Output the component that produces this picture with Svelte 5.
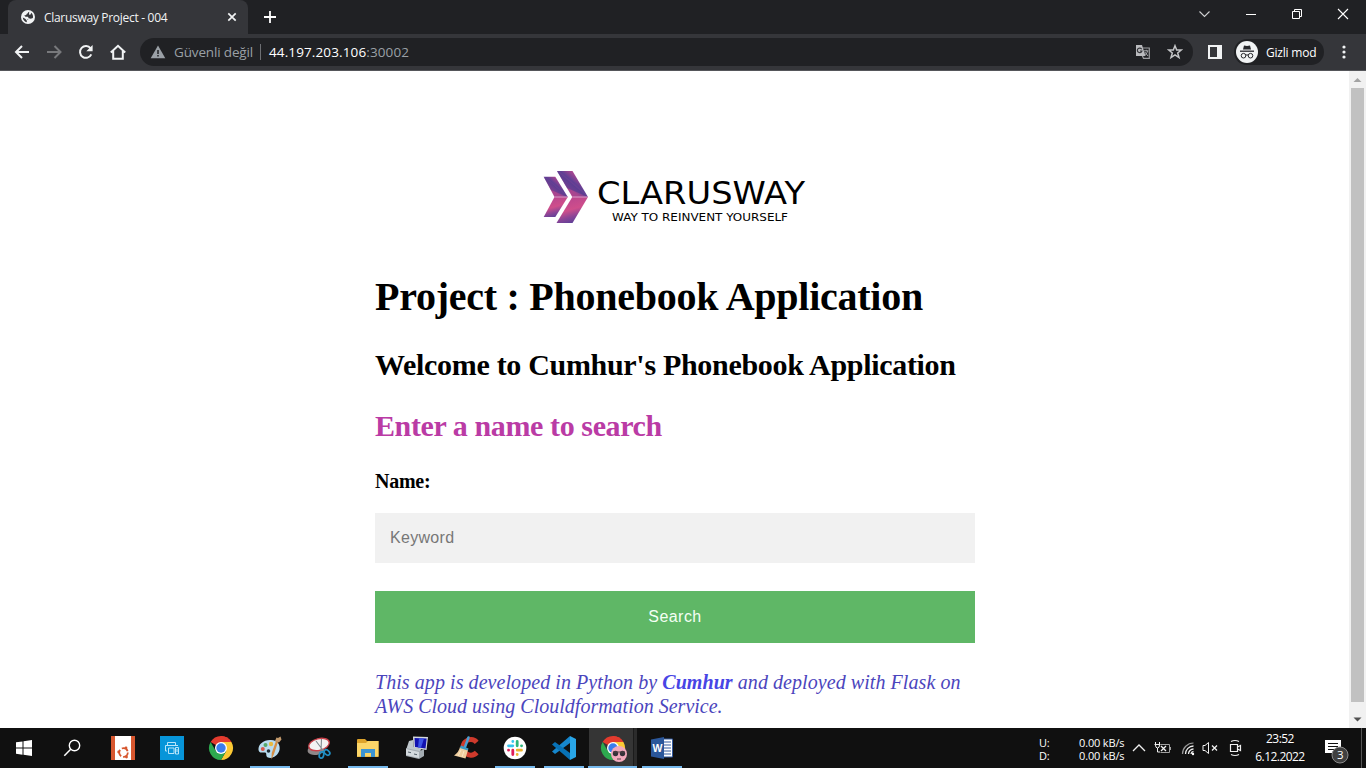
<script>
  const apps = [
    { id: 'ubuntu' }, { id: 'printer' }, { id: 'chrome' }, { id: 'paint', open: true },
    { id: 'snip' }, { id: 'files', open: true }, { id: 'putty' }, { id: 'cleaner' },
    { id: 'slack', open: true }, { id: 'code', open: true },
    { id: 'incognito', open: true, active: true }, { id: 'word', open: true }
  ];
</script>

{#snippet chromeMark()}
  <path d="M12 12L1.6 6A12 12 0 0 1 22.4 6Z" fill="#e33b2e" />
  <path d="M12 12V0A12 12 0 0 1 22.4 6Z" fill="#e33b2e" />
  <path d="M22.4 6A12 12 0 0 1 12 24L17.2 15L12 6Z" fill="#fcc934" />
  <path d="M1.6 6A12 12 0 0 0 12 24L17.2 15L6.8 15Z" fill="#2da94f" />
  <circle cx="12" cy="12" r="6" fill="#fff" />
  <circle cx="12" cy="12" r="4.7" fill="#3b7ded" />
{/snippet}

<div class="screen">
  <header class="tabs">
    <div class="tab">
      <svg class="globe" width="14" height="14" viewBox="0 0 14 14">
        <circle cx="7" cy="7" r="7" fill="#f1f3f4" />
        <path d="M8.200 1.700C6.600 2.300 7.400 3.300 5.800 3.800L5.200 5L3.200 5.600L4.500 6.700H6.800L7.900 8.200L6.800 9.700L5.600 10.300L5.900 12.300C3.600 11.700 2 10 1.800 7.500L4.200 8.700L5.600 10.300L7.900 8.200L9.800 8.700L11.900 8C12.400 6 11.600 3.900 10.200 2.800L9.600 4.400L8 4.700Z" fill="#35363a" />
      </svg>
      <span class="title">Clarusway Project - 004</span>
      <svg class="close" width="10" height="10" viewBox="0 0 10 10"><path d="M1.3 1.3L8.7 8.7M8.7 1.3L1.3 8.7" stroke="#f1f3f4" stroke-width="1.7" /></svg>
    </div>
    <svg class="plus" width="12" height="12" viewBox="0 0 12 12"><path d="M6 0V12M0 6H12" stroke="#fff" stroke-width="1.8" /></svg>
    <div class="controls">
      <svg width="46" height="28" viewBox="0 0 46 28"><path d="M17.5 11.5L22.5 16.5L27.5 11.5" fill="none" stroke="#d0d1d3" stroke-width="1.1" /></svg>
      <svg width="46" height="28" viewBox="0 0 46 28"><path d="M18 14.5H28" stroke="#fff" /></svg>
      <svg width="46" height="28" viewBox="0 0 46 28"><path d="M18.500 11.500H25.500V18.500H18.500ZM20.500 11V9.500H27.500V16.500H26" fill="none" stroke="#fff" /></svg>
      <svg width="46" height="28" viewBox="0 0 46 28"><path d="M18 9L28 19M28 9L18 19" stroke="#fff" stroke-width="1.1" /></svg>
    </div>
  </header>

  <div class="toolbar">
    <nav class="nav">
      <svg width="32" height="36" viewBox="0 0 32 36"><path d="M29 18H16.500M22 12L16 18L22 24" fill="none" stroke="#f1f3f4" stroke-width="2" /></svg>
      <svg width="32" height="36" viewBox="0 0 32 36"><path d="M15 18H28M22.500 12L28.500 18L22.500 24" fill="none" stroke="#78797c" stroke-width="2" /></svg>
      <svg width="32" height="36" viewBox="0 0 32 36"><path d="M27.300 20.400A5.900 5.900 0 1 1 26.600 14.300" fill="none" stroke="#f1f3f4" stroke-width="2" /><path d="M28.600 11V17.300H22.300Z" fill="#f1f3f4" /></svg>
      <svg width="32" height="36" viewBox="0 0 32 36"><path d="M14.800 18.600L22 11.800L29.200 18.600M17.200 17V24.700H26.800V17" fill="none" stroke="#f1f3f4" stroke-width="2" /></svg>
    </nav>
    <div class="address">
      <svg width="16" height="14" viewBox="0 0 16 14"><path d="M8 .6L15.300 13.200H.7Z" fill="#9aa0a6" /><path d="M8 5V9M8 10.100V11.600" stroke="#202124" stroke-width="1.500" /></svg>
      <span class="unsafe">Güvenli değil</span>
      <span class="bar"></span>
      <span class="url">44.197.203.106<i>:30002</i></span>
      <svg class="translate" width="16" height="16" viewBox="0 0 16 16">
        <path d="M6 4H14.300V14.300H8.500L7 11" fill="none" stroke="#9c9da0" stroke-width="1.200" />
        <path d="M1 1H7L10.500 12H1Z" fill="#babbbe" />
        <path d="M6.700 5.200A2.300 2.300 0 1 0 6.900 7H4.900" fill="none" stroke="#35363a" stroke-width="1.200" />
        <path d="M8.800 6.800H13.400M11.300 5.800V6.800M12.500 7C12 9.600 10.500 11 9.800 11.500M9.800 8L13 12" fill="none" stroke="#a6a7aa" />
      </svg>
      <svg class="star" width="16" height="16" viewBox="0 0 16 16"><path d="M8 1.700L9.700 6H14.300L10.700 8.900L12 13.600L8 10.900L4 13.600L5.300 8.900L1.700 6H6.300Z" fill="none" stroke="#c4c5c7" stroke-width="1.500" /></svg>
    </div>
    <svg class="panel" width="14" height="14" viewBox="0 0 14 14"><path fill-rule="evenodd" d="M0 0H14V14H0ZM2 2V12H9V2Z" fill="#f1f3f4" /></svg>
    <div class="mode">
      <svg width="22" height="22" viewBox="0 0 22 22">
        <circle cx="11" cy="11" r="11" fill="#f1f3f4" />
        <path d="M7 8.500L8 4.500L11 5L14 4.500L15 8.500Z" fill="#27282c" /><path d="M4 10.200H18" stroke="#27282c" stroke-width="1.300" />
        <circle cx="7.500" cy="14.700" r="2.300" fill="none" stroke="#27282c" /><circle cx="14.500" cy="14.700" r="2.300" fill="none" stroke="#27282c" />
        <path d="M9.500 14.200Q11 13.500 12.500 14.200" fill="none" stroke="#27282c" />
      </svg>
      <span>Gizli mod</span>
    </div>
    <svg class="dots" width="4" height="14" viewBox="0 0 4 14"><circle cx="2" cy="2" r="1.600" fill="#f1f3f4" /><circle cx="2" cy="7" r="1.600" fill="#f1f3f4" /><circle cx="2" cy="12" r="1.600" fill="#f1f3f4" /></svg>
  </div>

  <main class="viewport">
    <div class="page">
      <svg class="logo" width="270" height="60" viewBox="540 166 270 60">
        <defs>
          <linearGradient id="top" x1="0" y1=".9" x2=".9" y2="0"><stop offset="0" stop-color="#b5468f" /><stop offset=".35" stop-color="#a8458f" /><stop offset=".55" stop-color="#5d3f94" /><stop offset=".8" stop-color="#b94790" /><stop offset="1" stop-color="#7a4098" /></linearGradient>
          <linearGradient id="low" x1=".4" y1="0" x2=".75" y2="1"><stop offset="0" stop-color="#b9468f" /><stop offset=".45" stop-color="#cf4e8b" /><stop offset=".7" stop-color="#8b4496" /><stop offset="1" stop-color="#4d3f98" /></linearGradient>
        </defs>
        <path d="M543.700 176.800H555.300L567.800 197H554.500Z" fill="url(#top)" />
        <path d="M554.500 197H567.800L555.300 217H543.700Z" fill="url(#low)" />
        <path d="M557 171H572.500L588 197H572.300Z" fill="url(#top)" />
        <path d="M572.300 197H588L572.500 223H556.500Z" fill="url(#low)" />
        <path d="M557 171L588 197L567 188Z" fill="#4f3c92" opacity=".65" />
        <path d="M543.700 176.800L567.800 197L551 190Z" fill="#4f3c92" opacity=".55" />
        <path d="M554.500 197H567.800M572.300 197H588" stroke="#dc9cc8" stroke-width="1.200" />
        <text x="597" y="203.700" font-size="31.500" textLength="208" lengthAdjust="spacingAndGlyphs">CLARUSWAY</text>
        <text x="612" y="220.600" font-size="10.800" textLength="176" lengthAdjust="spacingAndGlyphs">WAY TO REINVENT YOURSELF</text>
      </svg>
      <h1>Project : Phonebook Application</h1>
      <h2>Welcome to Cumhur's Phonebook Application</h2>
      <h2 class="prompt">Enter a name to search</h2>
      <div class="label">Name:</div>
      <div class="field">Keyword</div>
      <div class="button">Search</div>
      <p>This app is developed in Python by <b>Cumhur</b> and deployed with Flask on<br /><span class="last">AWS Cloud using Clouldformation Service.</span></p>
    </div>
    <aside class="scroll">
      <svg width="17" height="17" viewBox="0 0 17 17"><path d="M4.500 11L8.500 7L12.500 11Z" fill="#a3a3a3" /></svg>
      <div class="thumb"></div>
      <svg width="17" height="17" viewBox="0 0 17 17"><path d="M4.500 6.500L8.500 10.500L12.500 6.500Z" fill="#505050" /></svg>
    </aside>
  </main>

  <footer class="taskbar">
    <svg width="48" height="40" viewBox="0 0 48 40"><path d="M16 14.300L22.500 13.400V19.500H16ZM23.500 13.200L32 12V19.500H23.500ZM16 20.500H22.500V26.700L16 25.800ZM23.500 20.500H32V28L23.500 26.800Z" fill="#fff" /></svg>
    <svg class="search" width="48" height="40" viewBox="0 0 48 40"><circle cx="26.500" cy="17.500" r="5.200" fill="none" stroke="#fff" stroke-width="1.400" /><path d="M22.700 21.300L16.300 27.700" stroke="#fff" stroke-width="1.500" /></svg>
    {#each apps as app}
      <div class="app" class:open={app.open} class:active={app.active}>
        <svg width="24" height="24" viewBox="0 0 24 24">
          {#if app.id === 'ubuntu'}
            <path d="M0 0H24V24H0Z" fill="#d7572f" /><path d="M4 0H20V24H4Z" fill="#fff" />
            <circle cx="12.500" cy="16.500" r="4.300" fill="none" stroke="#d7572f" stroke-width="1.800" stroke-dasharray="7 2" /><circle cx="7.700" cy="16" r="1.400" fill="#d7572f" /><circle cx="15" cy="12" r="1.400" fill="#d7572f" /><circle cx="15.500" cy="21" r="1.400" fill="#d7572f" />
          {:else if app.id === 'printer'}
            <path d="M0 0H24V24H0Z" fill="#0795d9" /><path d="M7.500 9V6.500H15.500V9M7 15H5.500V9.500H18M8.500 12H14V17.500H8.500ZM15.500 11.500H18.500V18H15.500ZM17 13V16" fill="none" stroke="#b9e5fa" />
          {:else if app.id === 'chrome'}
            {@render chromeMark()}
          {:else if app.id === 'paint'}
            <path d="M.5 14C0 8 6 3.500 13 4C20 4.500 22.500 9 21.500 14C20 20 14 23 10 21.500C7 20.300 9.500 17 7 16.500C4 16 1.500 18 .5 14Z" fill="#b9dcf0" />
            <circle cx="4.800" cy="13" r="2" fill="#d8584b" /><circle cx="7.500" cy="9" r="2" fill="#54a86a" /><circle cx="13" cy="8" r="2.200" fill="#e7b940" /><circle cx="10.500" cy="15" r="1.800" fill="#1e2b35" />
            <path d="M20 6L16 18L13.500 23.500L13.700 17L18 5Z" fill="#d58e45" /><path d="M17 5L18.500 1.500L20 2L22.500 .5L23.500 3.500L21 6.500Z" fill="#c39a6c" />
          {:else if app.id === 'snip'}
            <ellipse cx="9" cy="14" rx="8.500" ry="5" fill="#8e8788" transform="rotate(-8 9 14)" /><ellipse cx="12" cy="8.500" rx="10.500" ry="5.800" fill="#f3f3f3" stroke="#c9414a" stroke-width="1.400" transform="rotate(-14 12 8.500)" />
            <path d="M9 5L16.500 15M14.500 3L14 15" stroke="#7f8b90" stroke-width="1.100" /><ellipse cx="14.500" cy="19" rx="2.200" ry="3.200" fill="none" stroke="#218fc4" stroke-width="1.700" transform="rotate(15 14.500 19)" /><ellipse cx="20" cy="16.500" rx="2.200" ry="3.200" fill="none" stroke="#218fc4" stroke-width="1.700" transform="rotate(-50 20 16.500)" />
          {:else if app.id === 'files'}
            <path d="M1 4Q1 3 2 3H9L11 5H22.500V21H1Z" fill="#dda32b" /><path d="M1 7H10L12 5H22.500V20.500H1Z" fill="#fbd568" /><path d="M5 21V13H19V21H15V17H9V21Z" fill="#3c94d2" />
          {:else if app.id === 'putty'}
            <path d="M8 .5L23 1L21.500 14L8.500 12Z" fill="#d4d9dd" /><path d="M9.500 2L21.700 2.500L20.500 12.500L10 11Z" fill="#1212b0" /><path d="M14 2.200L19 2.400L16 11.800L13 11.400Z" fill="#3b54e7" />
            <path d="M4 5L8 4L8.500 11L16 13L15 17L1 14Z" fill="#bfc7cc" /><path d="M1 12L15 15L19 13V20L14 23L1 20Z" fill="#a5adb3" /><path d="M1 13L14 16V22L1 19Z" fill="#d3d9dd" /><path d="M3 16L6 16.700M9 18L12 18.700" stroke="#536069" />
          {:else if app.id === 'cleaner'}
            <path d="M22.700 6.300A7.800 7.800 0 1 0 22.700 16.500" fill="none" stroke="#cf3a2c" stroke-width="5" /><path d="M14.500 1.500L11 11" stroke="#4a9fd3" stroke-width="2.500" stroke-linecap="round" /><path d="M6 11L14 14L11.500 22.500L0 19.500Q5 16 6 11Z" fill="#f0cf9f" /><path d="M7 9.500L14.500 12.500L13.800 14.500L5.800 12Z" fill="#3b99c7" /><path d="M7 14L4 20M10 15L8 21" stroke="#fbe7c6" />
          {:else if app.id === 'slack'}
            <circle cx="12" cy="12" r="11.300" fill="#fff" />
            <g fill="none" stroke-linecap="round" stroke-width="2.800"><path d="M5.500 9.800H9.800M9.800 5.500V5.600" stroke="#36c5f0" /><path d="M14.200 5.500V9.800M18.500 9.800H18.600" stroke="#2eb67d" /><path d="M14.200 14.200H18.500M14.200 18.500V18.600" stroke="#ecb22e" /><path d="M5.500 14.200H5.600M9.800 14.200V18.500" stroke="#e01e5a" /></g>
          {:else if app.id === 'code'}
            <path d="M18 0V7L3 18L0 15.500Z" fill="#1687cd" /><path d="M0 8.500L3 6L18 17V24Z" fill="#0872b7" /><path d="M18 0L24 3V21L18 24Z" fill="#29a6e8" />
          {:else if app.id === 'incognito'}
            {@render chromeMark()}
            <circle cx="18" cy="18" r="8" fill="#f3a9bd" /><circle cx="14.500" cy="17.500" r="2.700" fill="#363139" /><circle cx="21.500" cy="17.500" r="2.700" fill="#363139" /><path d="M12 16H24M16 23H20" stroke="#544047" />
          {:else}
            <path d="M12 3H22.500V21H12Z" fill="#fff" stroke="#335a9e" /><path d="M14 6H21M14 9H21M14 12H21M14 15H21M14 18H21" stroke="#335a9e" /><path d="M1 3.500L14 1V23L1 20.500Z" fill="#2b579a" /><text class="w" x="2.500" y="16" font-size="10.500" font-weight="700" fill="#fff">W</text>
          {/if}
        </svg>
      </div>
    {/each}
    <div class="net"><span>U:</span><span>0.00 kB/s</span><span>D:</span><span>0.00 kB/s</span></div>
    <svg class="tray" width="120" height="40" viewBox="1128 728 120 40" fill="none" stroke="#f0f0f0">
      <path d="M1133 751L1139 745L1145 751" stroke-width="1.300" />
      <path d="M1157.500 752V748M1155.500 742V745Q1155.500 748 1157.500 748Q1159.500 748 1159.500 745V742M1154.500 744.500H1160.500M1157.500 752H1160" /><path d="M1161 744.500H1169.500V752.500H1160.500M1170.500 747V750" stroke="#a0a0a0" /><path d="M1161 746L1166 751M1166 746L1161 751" stroke-width="1.300" />
      <path d="M1182.500 754A11 11 0 0 1 1193.500 743" stroke="#999" stroke-width="1.200" /><path d="M1185.500 754A8 8 0 0 1 1193.500 746M1188.500 754A5 5 0 0 1 1193.500 749M1191 754A3 3 0 0 1 1193.500 751.500" stroke-width="1.300" /><circle cx="1193" cy="754" r="1.200" fill="#fff" stroke="none" />
      <path d="M1203 745.500H1205L1208.500 742.500V753.500L1205 750.500H1203Z" /><path d="M1212 745.500L1217 750.500M1217 745.500L1212 750.500" stroke-width="1.300" />
      <path d="M1230.500 744.500H1237.500V751.500H1230.500ZM1237.500 747L1240.500 745.500V750.500L1237.500 749M1231 741.500Q1235 739.500 1239 741.500M1231 754.500Q1235 756.500 1239 754.500" stroke-width="1.200" />
    </svg>
    <div class="clock"><span>23:52</span><span class="date">6.12.2022</span></div>
    <svg class="notice" width="28" height="28" viewBox="0 0 28 28"><path d="M1 2H17V15H11V18L8 15H1Z" fill="#fff" /><path d="M4 5.500H14M4 8.500H14M4 11.500H11" stroke="#111" /><circle cx="16" cy="17" r="8" fill="#404040" stroke="#8b8b8b" /><text x="13" y="21.300" font-size="11.500" fill="#fff">3</text></svg>
    <div class="peek"></div>
  </footer>
</div>

<style>
  :global(body) { margin: 0; overflow: hidden; }
  svg { display: block; flex: none; }
  .screen { width: 1366px; height: 768px; display: flex; flex-direction: column; overflow: hidden; background: #fff; font-family: "Open Sans", "Noto Sans", sans-serif; white-space: nowrap; }
  .tabs { height: 34px; flex: none; background: #202124; display: flex; }
  .tab { width: 240px; height: 34px; margin-left: 8px; border-radius: 8px 8px 0 0; background: #35363a; display: flex; align-items: center; box-sizing: border-box; padding: 0 11px 0 13px; color: #f1f3f4; font-size: 12px; }
  .title { margin-left: 9px; letter-spacing: -0.3px; }
  .close { margin-left: auto; }
  .plus { margin: 11px 0 0 16px; }
  .controls { margin-left: auto; display: flex; }
  .toolbar { height: 37px; flex: none; box-sizing: border-box; border-bottom: 1px solid #55565a; background: #35363a; display: flex; align-items: center; color: #fff; }
  .nav { width: 140px; display: flex; }
  .address { width: 1053px; height: 28px; box-sizing: border-box; background: #202124; border-radius: 14px; display: flex; align-items: center; padding: 0 10px; font-size: 13.5px; }
  .unsafe { margin-left: 8px; color: #9aa0a6; width: 79px; letter-spacing: -0.15px; }
  .bar { width: 1px; height: 16px; background: #6d6f73; margin: 0 8px 0 7px; }
  .url { letter-spacing: 0.12px; }
  .url i { font-style: normal; color: #9aa0a6; }
  .translate { margin-left: auto; }
  .star { margin-left: 16px; }
  .panel { margin-left: 15px; }
  .mode { width: 90px; height: 26px; box-sizing: border-box; margin-left: 12px; padding-left: 2px; border-radius: 13px; background: #202124; display: flex; align-items: center; font-size: 12px; }
  .mode span { margin-left: 8px; letter-spacing: -0.2px; }
  .dots { margin-left: 18px; }
  .viewport { height: 657px; flex: none; display: flex; justify-content: space-between; overflow: hidden; }
  .page { width: 600px; margin-left: 375px; padding-top: 95px; font-family: "Liberation Serif", serif; color: #000; }
  .logo { margin-left: 165px; font-family: "DejaVu Sans", sans-serif; }
  h1 { font-size: 40px; line-height: 46px; margin: 48px 0 0; letter-spacing: -0.26px; }
  h2 { font-size: 30px; line-height: 34px; margin: 28px 0 0; letter-spacing: -0.31px; }
  .prompt { color: #ba3ba5; margin-top: 27px; letter-spacing: -0.4px; }
  .label { font-size: 20px; font-weight: 700; line-height: 24px; margin-top: 26px; letter-spacing: -0.25px; }
  .field { box-sizing: border-box; height: 50px; margin-top: 20px; background: #f1f1f1; color: #777; padding-left: 15px; font: 16px/49px "Liberation Sans", sans-serif; letter-spacing: 0.3px; }
  .button { height: 52px; margin-top: 28px; background: #5fb766; color: #f4fff4; font: 16px/51px "Liberation Sans", sans-serif; text-align: center; letter-spacing: 0.45px; }
  p { font-size: 20px; font-style: italic; line-height: 24px; color: #4b45bd; margin: 27px 0 0; letter-spacing: 0.065px; }
  p b { color: #4845e5; }
  .last { letter-spacing: 0; }
  .scroll { width: 17px; background: #f1f1f1; display: flex; flex-direction: column; align-items: center; }
  .thumb { width: 13px; height: 614px; background: #c1c1c1; margin-bottom: 9px; }
  .taskbar { height: 40px; flex: none; background: #101010; display: flex; color: #fff; font-size: 12px; }
  .search { margin-right: 2px; }
  .app { width: 49px; height: 40px; box-sizing: border-box; display: flex; justify-content: center; padding-top: 8px; }
  .app svg { overflow: visible; }
  .open { background: linear-gradient(#76b9ed, #76b9ed) center bottom / 40px 2px no-repeat; }
  .active { background: linear-gradient(#76b9ed, #76b9ed) center bottom / 49px 2px no-repeat, linear-gradient(90deg, #101010 1px, #353535 1px, #353535 45px, #1b1b1b 45px, #1b1b1b 46px, #2b2b2b 46px); }
  .w { font-family: "Liberation Sans", sans-serif; }
  .net { width: 86px; margin: 8px 0 0 353px; display: grid; grid-template-columns: 40px 46px; grid-auto-rows: 13px; line-height: 13px; font-size: 11px; letter-spacing: -0.15px; align-content: start; }
  .tray { margin-left: 3px; }
  .clock { width: 64px; display: flex; flex-direction: column; align-items: center; line-height: 18px; padding-top: 2px; letter-spacing: -0.55px; }
  .notice { margin: 10px 0 0 12px; }
  .peek { width: 1px; height: 40px; margin-left: auto; margin-right: 4px; background: #555; }
</style>
